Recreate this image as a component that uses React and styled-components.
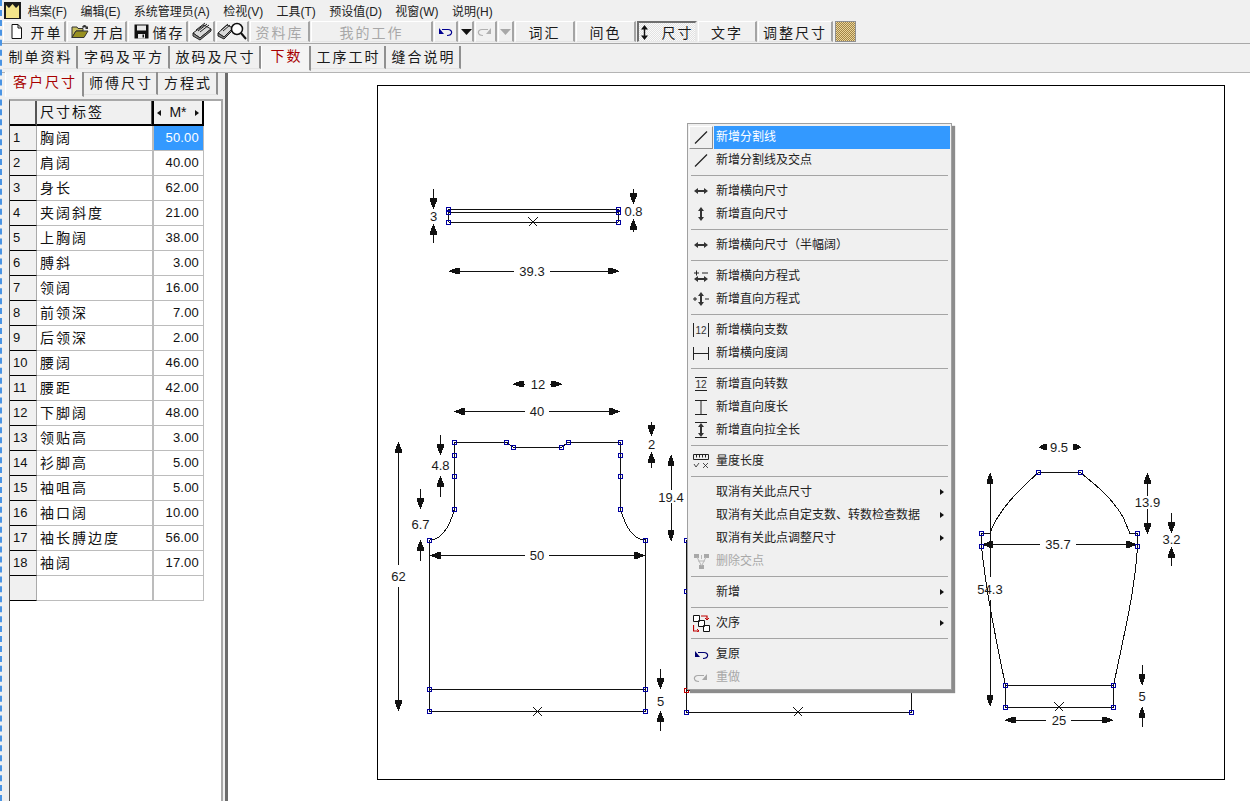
import styled, { createGlobalStyle } from 'styled-components'

const GlobalStyle = createGlobalStyle`
  html, body { margin: 0; padding: 0; background: #f0f0f0; overflow: hidden; }
  body { font-family: "Liberation Sans", "Noto Sans CJK SC", sans-serif; color: #111; }
`

const CJK = `"Liberation Sans", "Noto Sans CJK SC", sans-serif`

const menus = ['档案(F)', '编辑(E)', '系统管理员(A)', '检视(V)', '工具(T)', '预设值(D)', '视窗(W)', '说明(H)']
const pageTabs = [['制单资料', 75], ['字码及平方', 92], ['放码及尺寸', 91], ['下数', 50], ['工序工时', 75], ['缝合说明', 75]]
const subTabs = [['客户尺寸', 79], ['师傅尺寸', 74], ['方程式', 60]]
const sizes = [
  ['胸阔', '50.00'], ['肩阔', '40.00'], ['身长', '62.00'], ['夹阔斜度', '21.00'], ['上胸阔', '38.00'], ['膊斜', '3.00'],
  ['领阔', '16.00'], ['前领深', '7.00'], ['后领深', '2.00'], ['腰阔', '46.00'], ['腰距', '42.00'], ['下脚阔', '48.00'],
  ['领贴高', '3.00'], ['衫脚高', '5.00'], ['袖咀高', '5.00'], ['袖口阔', '10.00'], ['袖长膊边度', '56.00'], ['袖阔', '17.00'],
]
const contextMenu = [
  { label: '新增分割线', icon: 'line', active: true },
  { label: '新增分割线及交点', icon: 'line' },
  { sep: true },
  { label: '新增横向尺寸', icon: 'hdim' },
  { label: '新增直向尺寸', icon: 'vdim' },
  { sep: true },
  { label: '新增横向尺寸（半幅阔）', icon: 'hdim' },
  { sep: true },
  { label: '新增横向方程式', icon: 'hform' },
  { label: '新增直向方程式', icon: 'vform' },
  { sep: true },
  { label: '新增横向支数', icon: 'count' },
  { label: '新增横向度阔', icon: 'hspan' },
  { sep: true },
  { label: '新增直向转数', icon: 'turns' },
  { label: '新增直向度长', icon: 'vspan' },
  { label: '新增直向拉全长', icon: 'vfull' },
  { sep: true },
  { label: '量度长度', icon: 'ruler' },
  { sep: true },
  { label: '取消有关此点尺寸', sub: true },
  { label: '取消有关此点自定支数、转数检查数据', sub: true },
  { label: '取消有关此点调整尺寸', sub: true },
  { label: '删除交点', icon: 'node', disabled: true },
  { sep: true },
  { label: '新增', sub: true },
  { sep: true },
  { label: '次序', icon: 'order', sub: true },
  { sep: true },
  { label: '复原', icon: 'undo' },
  { label: '重做', icon: 'redo', disabled: true },
]

const Shell = styled.div`
  position: relative;
  width: 1250px;
  height: 801px;
  box-sizing: border-box;
  border-left: 2px dashed #4a94e4;
  background: #f0f0f0;
  display: flex;
  flex-direction: column;
  overflow: hidden;
`
const MenuBar = styled.div`
  height: 21px;
  display: flex;
  align-items: center;
  padding-left: 2px;
  flex: none;
`
const Logo = styled.svg`
  width: 17px;
  height: 17px;
`
const MenuLabel = styled.span`
  font-size: 12px;
  padding: 0 6.7px;
  color: #222;
  white-space: nowrap;
`
const Toolbar = styled.div`
  height: 23px;
  display: flex;
  padding-left: 1px;
  flex: none;
  border-bottom: 1px solid #a8a8a8;
  box-sizing: border-box;
`
const ToolButton = styled.div`
  width: ${p => p.$w}px;
  margin-right: 1px;
  height: 21px;
  box-sizing: border-box;
  display: flex;
  align-items: center;
  justify-content: center;
  gap: ${p => p.$iconGap ?? 4}px;
  padding-left: ${p => p.$pad || 0}px;
  font-size: 14px;
  letter-spacing: 2px;
  color: ${p => (p.$disabled ? '#a8a8a8' : '#1a1a1a')};
  border-style: solid;
  border-width: 1px 2px 1px 1px;
  border-color: ${p => (p.$pressed ? '#707070 #e8e8e8 #e8e8e8 #707070' : '#ffffff #a4a4a4 #e4e4e4 #ffffff')};
  background: ${p => (p.$pressed ? 'repeating-conic-gradient(#e2e2e2 0 25%, #fafafa 0 50%) 0 0 / 2px 2px' : '#f0f0f0')};
  ${p => p.$pressed && 'border-left-width: 2px; border-top-width: 2px;'}
`
const Swatch = styled.div`
  width: 21px;
  height: 21px;
  margin-left: 1px;
  box-sizing: border-box;
  border: 1px solid #909090;
  background: repeating-conic-gradient(#a08648 0 25%, #ecd49a 0 50%) 0 0 / 2px 2px;
`
const PageTabs = styled.div`
  height: 29px;
  display: flex;
  padding: 2px 0 0 1px;
  flex: none;
  border-bottom: 1px solid #b4b4b4;
  box-sizing: border-box;
`
const Tab = styled.div`
  width: ${p => p.$w}px;
  box-sizing: border-box;
  font-size: 14px;
  letter-spacing: 2px;
  text-align: center;
  white-space: nowrap;
  padding-left: 2px;
  height: ${p => (p.$active ? 25 : 23)}px;
  line-height: ${p => (p.$active ? 20 : 23)}px;
  color: ${p => (p.$active ? '#a80000' : '#1a1a1a')};
  background: ${p => (p.$active ? '#f4f4f4' : 'transparent')};
  border-right: 2px solid #909090;
  border-left: ${p => (p.$active ? '1px solid #fff' : 'none')};
  border-bottom: 1px solid ${p => (p.$active ? 'transparent' : '#e4e4e4')};
`
const Body = styled.div`
  flex: 1;
  display: flex;
  min-height: 0;
`
const LeftPanel = styled.div`
  width: 226px;
  flex: none;
  box-sizing: border-box;
  border-right: 3px solid #6c6c6c;
  display: flex;
  flex-direction: column;
`
const SubTabs = styled.div`
  height: 28px;
  margin-top: -2px;
  display: flex;
  padding: 1px 0 0 3px;
  box-sizing: border-box;
  flex: none;
`
const GridWrap = styled.div`
  flex: 1;
  margin: 0 2px 0 7px;
  background: #fff;
  border-left: 1px solid #555;
  border-top: 2px solid #a8a8a8;
  border-right: 2px solid #a8a8a8;
`
const Grid = styled.div`
  display: grid;
  grid-template-columns: 27px 116px 51px;
  grid-auto-rows: 25px;
  width: 194px;
`
const HeadCell = styled.div`
  box-sizing: border-box;
  background: #f0f0f0;
  border-bottom: 2px solid #000;
  border-right: 2px solid ${p => (p.$strong ? '#000' : '#555')};
  border-left: ${p => (p.$strong ? '2px solid #000' : 'none')};
  font-size: 14px;
  letter-spacing: 2px;
  line-height: 23px;
  padding-left: 3px;
  display: flex;
  align-items: center;
  justify-content: space-between;
  ${p => p.$strong && 'padding: 0 3px; letter-spacing: 0; margin-left: -1px;'}
`
const RowHead = styled.div`
  box-sizing: border-box;
  background: #f0f0f0;
  border-bottom: 1px solid #000;
  border-right: 1px solid #aaa;
  font-size: 13px;
  line-height: 24px;
  padding-left: 3px;
`
const Cell = styled.div`
  box-sizing: border-box;
  border-bottom: 1px solid #bcbcbc;
  border-right: 1px solid #bcbcbc;
  font-size: 14px;
  letter-spacing: ${p => (p.$num ? 0.2 : 2)}px;
  line-height: 24px;
  padding: ${p => (p.$num ? '0 4px 0 0' : '0 0 0 3px')};
  text-align: ${p => (p.$num ? 'right' : 'left')};
  ${p => p.$num && 'font-size: 13px; border-left: 1px solid #bcbcbc;'}
  ${p => p.$selected && 'background: #3399ff; color: #fff;'}
`
const Canvas = styled.div`
  flex: 1;
  background: #fff;
  padding: 12px 0 0 149px;
`
const Paper = styled.div`
  width: 846px;
  height: 693px;
  border: 1px solid #000;
  background: #fff;
`
const Drawing = styled.svg`
  display: block;
  width: 846px;
  height: 693px;
  path, line, rect, polygon { shape-rendering: crispEdges; }
  text {
    font-family: ${CJK};
    font-size: 13px;
    fill: #1a1a1a;
    text-anchor: middle;
    dominant-baseline: central;
  }
`
const ContextMenu = styled.div`
  position: absolute;
  left: 685px;
  top: 123px;
  width: 265px;
  height: 567px;
  box-sizing: border-box;
  padding: 2px 1px 0;
  background: #f0f0f0;
  border: 1px solid #a0a0a0;
  box-shadow: 3px 3px 1px #8c8c8c;
  z-index: 5;
`
const MenuRow = styled.div`
  height: 23px;
  display: flex;
  align-items: center;
  font-size: 12px;
  color: ${p => (p.$disabled ? '#a8a8a8' : '#222')};
`
const IconBox = styled.div`
  width: 24px;
  height: 23px;
  flex: none;
  margin-right: 1px;
  box-sizing: border-box;
  display: flex;
  align-items: center;
  justify-content: center;
  ${p => p.$raised && 'border: 1px solid; border-color: #fff #909090 #909090 #fff;'}
`
const MenuText = styled.div`
  flex: 1;
  height: 23px;
  line-height: 23px;
  padding-left: 2px;
  position: relative;
  white-space: nowrap;
  ${p => p.$active && 'background: #3399ff; color: #fff;'}
`
const SubArrow = styled.span`
  position: absolute;
  right: 6px;
  top: 8px;
  border-left: 4px solid #111;
  border-top: 3.5px solid transparent;
  border-bottom: 3.5px solid transparent;
`
const Separator = styled.div`
  height: 1px;
  margin: 3px 2px 4px 2px;
  background: #a4a4a4;
`
const SmallArrow = styled.span`
  border-style: solid;
  border-width: 3.5px ${p => (p.$right ? 0 : '4px')} 3.5px ${p => (p.$right ? '4px' : 0)};
  border-color: transparent ${p => (p.$right ? 'transparent' : '#111')} transparent ${p => (p.$right ? '#111' : 'transparent')};
`

function MenuIcon({ name }) {
  const s = { fill: 'none', stroke: '#222', strokeWidth: 1 }
  const arrowH = (y) => <path d={`M1 ${y}l4-3v2h6v-2l4 3-4 3v-2H5v2z`} fill="#333" />
  const arrowV = (x) => <path d={`M${x} 1l3 4h-2v6h2l-3 4-3-4h2V5h-2z`} fill="#333" />
  let inner = null
  if (name === 'line') inner = <path d="M2 14.500L14 2.500" {...s} strokeWidth="1.200" />
  if (name === 'hdim') inner = arrowH(8)
  if (name === 'vdim') inner = arrowV(8)
  if (name === 'hform') inner = <>{arrowH(11)}<path d="M1 5h5M3.500 2.500v5M9 5h6" {...s} /></>
  if (name === 'vform') inner = <>{arrowV(8)}<path d="M0 8h4M2 6v4M12 8h4" {...s} /></>
  if (name === 'count') inner = <><path d="M.5 1v14M15.500 1v14" {...s} /><text x="8" y="12" fontSize="10" textAnchor="middle" fill="#333" fontFamily="Liberation Sans">12</text></>
  if (name === 'hspan') inner = <path d="M.5 2v13M15.500 2v13M.5 8.500h15" {...s} />
  if (name === 'turns') inner = <><path d="M2 1.500h12M2 14.500h12" {...s} /><text x="8" y="12" fontSize="10" textAnchor="middle" fill="#333" fontFamily="Liberation Sans">12</text></>
  if (name === 'vspan') inner = <path d="M2 1.500h12M2 15.500h12M8 1.500v14" {...s} />
  if (name === 'vfull') inner = <><path d="M2 .5h12M2 15.500h12" {...s} />{arrowV(8)}</>
  if (name === 'ruler') inner = <><path d="M.5 1.500h15v5H.5zM3.500 1.500v3M6.500 1.500v3M9.500 1.500v3M12.500 1.500v3" {...s} /><path d="M1 11l2 3 3-4M10 10l5 5M15 10l-5 5" {...s} strokeWidth=".8" /></>
  if (name === 'node') inner = <><path d="M1 1h5v4H1zM11 1h5v4h-5zM6 12h5v4H6z" fill="#a8a8a8" /><path d="M4 4l4.500 9M13 4l-4.500 9M8.500 2v4M5 8h7" stroke="#b8b8b8" fill="none" /></>
  if (name === 'order') inner = <><path d="M.5.5h6v6h-6zM5.500 5.500h6v6h-6zM10.500 10.500h6v6h-6z" fill="#fff" stroke="#111" /><path d="M8 1h6v4M.5 10v6h5" fill="none" stroke="#c00000" strokeWidth="1.200" /><path d="M12 3l2 2 2-2M4 14l2 2-2 1" fill="none" stroke="#c00000" /></>
  if (name === 'undo') inner = <UndoPath color="#000070" />
  if (name === 'redo') inner = <g transform="translate(16 0) scale(-1 1)"><UndoPath color="#a8a8a8" /></g>
  return <svg width="17" height="17" viewBox="0 0 17 17">{inner}</svg>
}

function UndoPath({ color }) {
  return <><path d="M5 6.500h6c5 0 5 6-1 6" fill="none" stroke={color} strokeWidth="1.200" /><path d="M2 5v6h5z" fill={color} /></>
}

function ToolIcon({ name }) {
  if (name === 'new') return <svg width="13" height="15" viewBox="0 0 13 15"><path d="M2 .5h6l3.500 3.500v10.500H2z" fill="#fff" stroke="#111" /><path d="M8 .5V4h3.500" fill="none" stroke="#111" /></svg>
  if (name === 'open') return <svg width="18" height="15" viewBox="0 0 18 15"><path d="M1 3h5l1 1.500h5V7H5L1 13.500z" fill="#c8c060" stroke="#333" /><path d="M5 7h12l-4 6.500H1z" fill="#989020" stroke="#333" /><path d="M11 3c2-3 4-2 5 0l1-1v3h-3l1-1c-1-1-2-1-3 0" fill="#333" /></svg>
  if (name === 'save') return <svg width="15" height="15" viewBox="0 0 15 15"><path d="M.5.500h14v14H.5z" fill="#111" /><path d="M3 1.500h9v5H3z" fill="#e8e8e8" /><path d="M4 10h7v4.500H4z" fill="#e8e8e8" /><path d="M8.500 10.500h1.500v3H8.500z" fill="#111" /></svg>
  if (name === 'print') return <svg width="22" height="19" viewBox="0 0 22 19"><path d="M2 11l11-8 7 4-11 9z" fill="#d8d8d8" stroke="#222" /><path d="M2 11v3l7 4 11-9V7l-11 9z" fill="#888" stroke="#222" /><path d="M5 8l9-7M7 9l9-7M9 10l9-7" stroke="#222" fill="none" /></svg>
  if (name === 'preview') return <svg width="30" height="19" viewBox="0 0 30 19"><path d="M1 11l9-8 6 3-9 9z" fill="#d8d8d8" stroke="#222" /><path d="M1 11v3l6 3 9-9V6l-9 9z" fill="#888" stroke="#222" /><path d="M4 8l7-6M6 9l7-6" stroke="#222" fill="none" /><circle cx="20" cy="7" r="5.500" fill="#fff" stroke="#111" strokeWidth="1.500" /><path d="M24 11l5 6" stroke="#111" strokeWidth="2" /></svg>
  if (name === 'undo') return <svg width="17" height="17" viewBox="0 0 17 17"><UndoPath color="#000090" /></svg>
  if (name === 'redo') return <svg width="17" height="17" viewBox="0 0 17 17"><g transform="translate(16 0) scale(-1 1)"><UndoPath color="#b0b0b0" /></g></svg>
  if (name === 'down') return <svg width="11" height="6" viewBox="0 0 11 6"><path d="M0 0h11L5.500 6z" fill="#111" /></svg>
  if (name === 'downOff') return <svg width="11" height="6" viewBox="0 0 11 6"><path d="M0 0h11L5.500 6z" fill="#a8a8a8" /></svg>
  if (name === 'size') return <svg width="7" height="15" viewBox="0 0 7 15"><path d="M3.500 0L7 4.500H4.200v6H7L3.500 15 0 10.500h2.800v-6H0z" fill="#111" /></svg>
  return null
}

function Handle({ x, y, red }) {
  return <rect x={Math.floor(x) - 1.5} y={Math.floor(y) - 1.5} width="4" height="4" fill="none" stroke={red ? '#c00000' : '#0000a0'} strokeWidth="1" />
}

function Cross({ x, y }) {
  return <path d={`M${x - 4.5} ${y - 4.5}l9 9M${x + 4.5} ${y - 4.5}l-9 9`} stroke="#111" fill="none" strokeWidth="1" />
}

// solid arrow: tip at (x,y), tail running to (tx,ty); the head never passes the tail
function Arrow({ x, y, tx, ty }) {
  const len = Math.hypot(tx - x, ty - y) || 1
  const ux = (tx - x) / len
  const uy = (ty - y) / len
  const nx = -uy
  const ny = ux
  const head = Math.min(len, 11)
  const p = (a, b) => `${x + ux * a + nx * b},${y + uy * a + ny * b}`
  return (
    <g>
      <line x1={x} y1={y} x2={tx} y2={ty} stroke="#111" strokeWidth="1" />
      <polygon points={`${p(0, 0)} ${p(head * 0.72, 3.5)} ${p(head, 3)} ${p(head, -3)} ${p(head * 0.72, -3.5)}`} fill="#111" />
    </g>
  )
}

function HDim({ y, x1, x2, gap1, gap2, label, lx }) {
  return (
    <g>
      <Arrow x={x1} y={y} tx={gap1} ty={y} />
      <Arrow x={x2} y={y} tx={gap2} ty={y} />
      <text x={lx} y={y}>{label}</text>
    </g>
  )
}

function VDim({ x, y1, y2, gap1, gap2, label, lx, ly }) {
  return (
    <g>
      <Arrow x={x} y={y1} tx={x} ty={gap1} />
      <Arrow x={x} y={y2} tx={x} ty={gap2} />
      <text x={lx ?? x} y={ly}>{label}</text>
    </g>
  )
}

function Pattern() {
  const line = { fill: 'none', stroke: '#111', strokeWidth: 1 }
  const handles = [
    [448.5, 209], [448.5, 212.5], [448.5, 222], [618, 209], [618, 212.5], [618, 222],
    [454.5, 442], [506, 442], [513.5, 447.5], [561.5, 447.5], [568.5, 442], [620.5, 442],
    [454.5, 455], [454.5, 476.5], [454.5, 509], [620.5, 455], [620.5, 476.5], [620.5, 509],
    [429.5, 540], [645.5, 540], [429.5, 689.5], [645.5, 689.5], [429.5, 711.5], [645.5, 711.5],
    [686, 540], [686, 591], [686, 712], [911, 690], [911, 712],
    [1038.5, 472.5], [1080.5, 472.5], [981.5, 533.5], [981.5, 546.5], [1137.5, 533.5], [1137.5, 546.5],
    [1005.5, 685.5], [1113.5, 685.5], [1005.5, 707.5], [1113.5, 707.5],
  ]
  return (
    <Drawing viewBox="378 86 846 693">
      {/* collar */}
      <path d="M448.500 209.500H618M448.500 212.500H618M448.500 222H618M448.500 209v13M618 209v13" {...line} />
      <Cross x={533} y={222} />
      <VDim x={433.5} y1={209} gap1={189} y2={224} gap2={243} label="3" ly={216.5} />
      <VDim x={633.5} y1={204} gap1={189} y2={219} gap2={232} label="0.8" ly={211} />
      <HDim y={271} x1={449} x2={619} gap1={514} gap2={550} label="39.3" lx={532} />

      {/* body front */}
      <path d="M454.500 442H506L513.500 447.500H561.500L568.500 442H620.500V509C625 525 632 540 645.500 540V711.500H429.500V540C443 540 450 525 454.500 509V442ZM429.500 689.500H645.500" {...line} />
      <Cross x={537.5} y={711.5} />
      <HDim y={384} x1={513} x2={562} gap1={525} gap2={550} label="12" lx={538} />
      <HDim y={411.5} x1={454} x2={620} gap1={525} gap2={549} label="40" lx={537} />
      <HDim y={555.5} x1={430} x2={645} gap1={525} gap2={549} label="50" lx={537} />
      <VDim x={398.5} y1={442} gap1={565} y2={711} gap2={587} label="62" ly={576} />
      <VDim x={440.5} y1={455} gap1={435} y2={476} gap2={497} label="4.8" ly={465.5} />
      <VDim x={420.5} y1={509} gap1={489} y2={540} gap2={561} label="6.7" ly={524} />
      <VDim x={651.5} y1={436} gap1={422} y2={452} gap2={468} label="2" ly={444.5} />
      <VDim x={671} y1={455} gap1={490} y2={541} gap2={503} label="19.4" ly={497} />
      <VDim x={660.5} y1={689} gap1={669} y2={711} gap2={731} label="5" ly={701} />

      {/* body back, mostly under the menu */}
      <path d="M686 540V712H911V690H686" {...line} />
      <Cross x={798} y={712} />

      {/* sleeve */}
      <path d="M1038.500 472.500H1080.500C1095 485 1110 495 1123 517L1130 533.500H1137.500V546.500C1135 590 1125 630 1113.500 685.500V707.500H1005.500V685.500C994 630 986 590 981.500 546.500V533.500H990C998 510 1018 490 1038.500 472.500ZM1005.500 685.500H1113.500" {...line} />
      <Cross x={1059} y={707} />
      <HDim y={447} x1={1039} x2={1081} gap1={1047} gap2={1073} label="9.5" lx={1059} />
      <HDim y={544.5} x1={982} x2={1137} gap1={1040} gap2={1076} label="35.7" lx={1058} />
      <HDim y={720} x1={1005} x2={1113} gap1={1046} gap2={1071} label="25" lx={1059} />
      <VDim x={990} y1={473} gap1={577} y2={706} gap2={600} label="54.3" ly={589} />
      <VDim x={1147.5} y1={473} gap1={496} y2={534} gap2={509} label="13.9" ly={502} />
      <VDim x={1171.5} y1={533} gap1={513} y2={547} gap2={566} label="3.2" ly={539.5} />
      <VDim x={1142} y1={685} gap1={665} y2={707} gap2={727} label="5" ly={696} />

      {handles.map(([x, y], i) => <Handle key={i} x={x} y={y} />)}
      <Handle x={686} y={690} red />
    </Drawing>
  )
}

export default function App() {
  return (
    <Shell>
      <GlobalStyle />
      <MenuBar>
        <Logo viewBox="0 0 17 17">
          <rect width="17" height="17" fill="#1c1c1c" />
          <path d="M2 16V3l3 3 3.500-4 3.500 4 3-3v13z" fill="#f4e58a" />
        </Logo>
        {menus.map((m) => <MenuLabel key={m}>{m}</MenuLabel>)}
      </MenuBar>

      <Toolbar>
        <ToolButton $w={63} $iconGap={8} $pad={4}><ToolIcon name="new" />开单</ToolButton>
        <ToolButton $w={60} $iconGap={4} $pad={3}><ToolIcon name="open" />开启</ToolButton>
        <ToolButton $w={60} $pad={3}><ToolIcon name="save" />储存</ToolButton>
        <ToolButton $w={26}><ToolIcon name="print" /></ToolButton>
        <ToolButton $w={33}><ToolIcon name="preview" /></ToolButton>
        <ToolButton $w={60} $disabled>资料库</ToolButton>
        <ToolButton $w={122} $disabled>我的工作</ToolButton>
        <ToolButton $w={24}><ToolIcon name="undo" /></ToolButton>
        <ToolButton $w={15}><ToolIcon name="down" /></ToolButton>
        <ToolButton $w={22}><ToolIcon name="redo" /></ToolButton>
        <ToolButton $w={16}><ToolIcon name="downOff" /></ToolButton>
        <ToolButton $w={60}>词汇</ToolButton>
        <ToolButton $w={60}>间色</ToolButton>
        <ToolButton $w={60} $pressed $iconGap={14}><ToolIcon name="size" />尺寸</ToolButton>
        <ToolButton $w={59}>文字</ToolButton>
        <ToolButton $w={75}>调整尺寸</ToolButton>
        <Swatch />
      </Toolbar>

      <PageTabs>
        {pageTabs.map(([t, w]) => <Tab key={t} $w={w} $active={t === '下数'}>{t}</Tab>)}
      </PageTabs>

      <Body>
        <LeftPanel>
          <SubTabs>
            {subTabs.map(([t, w], i) => <Tab key={t} $w={w} $active={i === 0}>{t}</Tab>)}
          </SubTabs>
          <GridWrap>
            <Grid>
              <HeadCell />
              <HeadCell>尺寸标签</HeadCell>
              <HeadCell $strong><SmallArrow />M*<SmallArrow $right /></HeadCell>
              {sizes.map(([label, value], i) => [
                <RowHead key={`h${i}`}>{i + 1}</RowHead>,
                <Cell key={`l${i}`}>{label}</Cell>,
                <Cell key={`v${i}`} $num $selected={i === 0}>{value}</Cell>,
              ])}
              <RowHead />
              <Cell />
              <Cell $num />
            </Grid>
          </GridWrap>
        </LeftPanel>
        <Canvas>
          <Paper>
            <Pattern />
          </Paper>
        </Canvas>
      </Body>

      <ContextMenu>
        {contextMenu.map((item, i) => item.sep ? <Separator key={i} /> : (
          <MenuRow key={i} $disabled={item.disabled}>
            <IconBox $raised={item.active}>{item.icon && <MenuIcon name={item.icon} />}</IconBox>
            <MenuText $active={item.active}>
              {item.label}
              {item.sub && <SubArrow />}
            </MenuText>
          </MenuRow>
        ))}
      </ContextMenu>
    </Shell>
  )
}
